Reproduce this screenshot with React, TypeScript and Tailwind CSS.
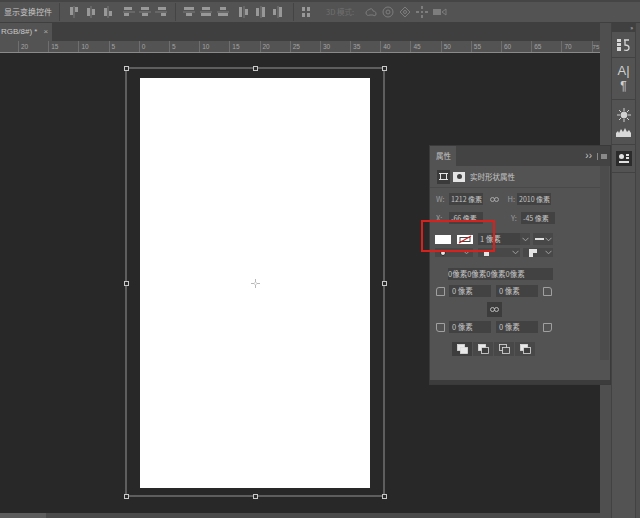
import React from "react";

const font = { fontFamily: '"Noto Sans CJK SC","Liberation Sans",sans-serif' };
const rulerLabels = [20, 15, 10, 5, 0, 5, 10, 15, 20, 25, 30, 35, 40, 45, 50, 55, 60, 65, 70];

function Align({ v, bars }: { v?: boolean; bars: number[][] }) {
  return (
    <svg width="12" height="12" viewBox="0 0 12 12" className="shrink-0">
      {v ? <rect x="0" y="5.5" width="12" height="1" fill="#7c7c7c" /> : <rect x="5.5" y="0" width="1" height="12" fill="#7c7c7c" />}
      {bars.map((b, i) => (
        <rect key={i} x={b[0]} y={b[1]} width={b[2]} height={b[3]} fill="#989898" />
      ))}
    </svg>
  );
}

function Sep() {
  return <div className="w-px h-[18px] bg-[#444444] shrink-0" />;
}

function Field({ w, children, cls = "" }: { w: string; children?: React.ReactNode; cls?: string }) {
  return (
    <div className={`${w} ${cls} h-[12px] bg-[#424242] text-[7.5px] leading-[12px] text-[#c4c4c4] pl-[2px] whitespace-nowrap overflow-hidden shrink-0`}>
      {children}
    </div>
  );
}

function Chevron() {
  return (
    <svg width="7" height="5" viewBox="0 0 7 5" className="shrink-0">
      <path d="M0.5 0.8 L3.5 3.8 L6.5 0.8" fill="none" stroke="#a0a0a0" strokeWidth="1" />
    </svg>
  );
}

function Corner({ r }: { r: string }) {
  return <div className={`w-[9px] h-[9px] border border-[#a0a0a0] shrink-0 ${r}`} />;
}

function Handle({ cls }: { cls: string }) {
  return <div className={`absolute w-[5px] h-[5px] border border-[#c8c8c8] bg-[#2a2a2a] ${cls}`} />;
}

function PathOp({ a, b, active }: { a: string; b: string; active?: boolean }) {
  return (
    <div className={`w-[20px] h-[14px] flex items-center justify-center ${active ? "bg-[#3e3e3e]" : "bg-[#484848]"}`}>
      <svg width="11" height="10" viewBox="0 0 11 10">
        <rect x="0.5" y="0.5" width="7" height="6" fill={a} stroke="#dcdcdc" strokeWidth="0.8" />
        <rect x="3.5" y="3.5" width="7" height="6" fill={b} stroke="#dcdcdc" strokeWidth="0.8" />
      </svg>
    </div>
  );
}

export default function App() {
  return (
    <div className="relative w-[640px] h-[518px] overflow-hidden flex flex-col bg-[#535353]" style={font}>
      {/* options bar */}
      <div className="h-[23px] shrink-0 bg-[#535353] border-t-2 border-[#454545] border-b border-b-[#3f3f3f] flex items-center text-[#c8c8c8]">
        <span className="text-[8px] ml-[4px] w-[52px] shrink-0 whitespace-nowrap">显示变换控件</span>
        <div className="ml-[3px]"><Sep /></div>
        <div className="flex items-center gap-[5px] ml-[8px]">
          <Align bars={[[2, 1, 3, 8], [7, 1, 3, 5]]} />
          <Align bars={[[2, 2, 3, 8], [7, 3, 3, 6]]} />
          <Align bars={[[2, 2, 3, 8], [7, 5, 3, 5]]} />
        </div>
        <div className="flex items-center gap-[4px] ml-[9px]">
          <Align v bars={[[1, 1, 8, 3], [1, 7, 5, 3]]} />
          <Align v bars={[[2, 1, 8, 3], [3, 7, 6, 3]]} />
          <Align v bars={[[3, 1, 8, 3], [6, 7, 5, 3]]} />
        </div>
        <div className="ml-[8px]"><Sep /></div>
        <div className="flex items-center gap-[5px] ml-[7px]">
          <Align v bars={[[1, 1, 10, 3], [3, 7, 6, 3]]} />
          <Align v bars={[[2, 1, 8, 3], [1, 7, 10, 3]]} />
          <Align v bars={[[3, 1, 6, 3], [1, 7, 10, 3]]} />
        </div>
        <div className="flex items-center gap-[5px] ml-[9px]">
          <Align bars={[[1, 1, 3, 10], [7, 3, 3, 6]]} />
          <Align bars={[[1, 2, 3, 8], [7, 1, 3, 10]]} />
          <Align bars={[[1, 3, 3, 6], [7, 1, 3, 10]]} />
        </div>
        <div className="ml-[9px]"><Sep /></div>
        <div className="ml-[6px]">
          <svg width="12" height="12" viewBox="0 0 12 12">
            <rect x="2" y="1" width="3" height="4" fill="#989898" />
            <rect x="7" y="1" width="3" height="4" fill="#989898" />
            <rect x="2" y="7" width="3" height="4" fill="#989898" />
            <rect x="7" y="7" width="3" height="4" fill="#989898" />
          </svg>
        </div>
        <span className="ml-[14px] text-[7.5px] text-[#6f6f6f] w-[31px] whitespace-nowrap shrink-0">3D 模式:</span>
        <div className="flex items-center gap-[5px] ml-[8px] text-[#7d7d7d]">
          <svg width="12" height="12" viewBox="0 0 12 12" fill="none" stroke="currentColor"><path d="M1 7c0-3 3-3 4-4 2-1 3 1 3 2 2 0 3 1 3 3s-2 2-3 1H5C3 10 1 9 1 7z" /></svg>
          <svg width="12" height="12" viewBox="0 0 12 12" fill="none" stroke="currentColor"><circle cx="6" cy="6" r="5" /><circle cx="6" cy="6" r="2" /></svg>
          <svg width="12" height="12" viewBox="0 0 12 12" fill="none" stroke="currentColor"><path d="M6 1l5 5-5 5-5-5z" /><circle cx="6" cy="6" r="1.5" /></svg>
          <svg width="12" height="12" viewBox="0 0 12 12" fill="currentColor"><rect x="5" y="0" width="2" height="3" /><rect x="5" y="9" width="2" height="3" /><rect x="0" y="5" width="3" height="2" /><rect x="9" y="5" width="3" height="2" /><rect x="5" y="5" width="2" height="2" /></svg>
          <svg width="14" height="10" viewBox="0 0 14 10" fill="currentColor"><rect x="0" y="2" width="8" height="6" /><path d="M9 5l4-3v6z" fill="none" stroke="currentColor" /></svg>
        </div>
      </div>

      <div className="flex-1 flex min-h-0">
        {/* document column */}
        <div className="w-[600px] shrink-0 flex flex-col min-h-0">
          {/* tab row */}
          <div className="h-[18px] shrink-0 bg-[#3f3f3f] flex">
            <div className="w-[52px] h-full bg-[#535353] text-[8px] leading-[18px] text-[#c8c8c8] pl-[1px] flex items-center gap-[6px] whitespace-nowrap" style={{ fontFamily: '"Liberation Sans",sans-serif' }}>
              <span>RGB/8#) *</span>
              <span className="text-[#a8a8a8]">×</span>
            </div>
          </div>
          {/* ruler */}
          <div className="h-[12px] shrink-0 bg-[#535353] border-b border-[#8a8a8a] flex pl-[18px]" style={{ fontFamily: '"Liberation Sans",sans-serif' }}>
            {rulerLabels.map((n, i) => (
              <div key={i} className="w-[30.2px] shrink-0 h-full border-l border-[#6e6e6e] text-[6.5px] leading-[12px] text-[#a4a4a4] pl-[2px]">{n}</div>
            ))}
            <div className="w-[8px] shrink-0 h-full border-l border-[#6e6e6e] text-[6px] leading-[12px] text-[#a4a4a4]">75</div>
          </div>
          {/* canvas */}
          <div className="relative flex-1 bg-[#282828] min-h-0">
            <div className="absolute left-[125px] top-[14px] w-[260px] h-[430px] border-2 border-[#5e5e5e]" />
            <div className="absolute left-[140px] top-[25px] w-[230px] h-[410px] bg-white" />
            <Handle cls="left-[124px] top-[13px]" />
            <Handle cls="left-[253px] top-[13px]" />
            <Handle cls="left-[382px] top-[13px]" />
            <Handle cls="left-[124px] top-[228px]" />
            <Handle cls="left-[382px] top-[228px]" />
            <Handle cls="left-[124px] top-[441px]" />
            <Handle cls="left-[253px] top-[441px]" />
            <Handle cls="left-[382px] top-[441px]" />
            <svg className="absolute left-[250px] top-[225px]" width="11" height="11" viewBox="0 0 11 11" fill="none" stroke="#b8b8b8">
              <path d="M5.5 1v3M5.5 7v3M1 5.5h3M7 5.5h3" />
              <rect x="4.5" y="4.5" width="2" height="2" stroke="#e0e0e0" />
            </svg>
          </div>
          {/* status */}
          <div className="h-[5px] shrink-0 bg-[#4a4a4a] flex">
            <div className="w-[46px] bg-[#5c5c5c]" />
          </div>
        </div>

        {/* right dock */}
        <div className="flex-1 flex bg-[#4f4f4f] pl-[11px]">
          <div className="w-[25px] shrink-0 bg-[#535353] border-l border-r border-[#424242] flex flex-col items-center self-stretch">
            <div className="w-full h-[9px] bg-[#404040] text-[6px] leading-[9px] text-right pr-[2px] text-[#c0c0c0]">»</div>
            <div className="w-full h-[26px] flex items-center justify-center border-b border-[#424242]">
              <svg width="13" height="14" viewBox="0 0 13 14" fill="#d8d8d8">
                <rect x="0" y="1" width="4" height="3" /><rect x="0" y="5" width="4" height="3" /><rect x="0" y="9" width="4" height="4" />
                <path d="M7 2h5M8 2v5c3 0 4 1 4 3s-2 3-5 2" fill="none" stroke="#d8d8d8" strokeWidth="1.3" />
              </svg>
            </div>
            <div className="w-full h-[42px] flex flex-col items-center justify-center border-b border-[#424242] text-[#d0d0d0]">
              <span className="text-[13px] leading-[16px]" style={{ fontFamily: '"Liberation Sans",sans-serif' }}>A|</span>
              <span className="text-[12px] leading-[15px]" style={{ fontFamily: '"Liberation Sans",sans-serif' }}>¶</span>
            </div>
            <div className="w-full h-[45px] flex flex-col items-center justify-center gap-[6px] border-b border-[#424242]">
              <svg width="14" height="14" viewBox="0 0 14 14" fill="#d0d0d0" stroke="#d0d0d0">
                <circle cx="7" cy="7" r="3" />
                <path d="M7 0v3M7 11v3M0 7h3M11 7h3M2 2l2 2M10 10l2 2M2 12l2-2M10 4l2-2" fill="none" />
              </svg>
              <svg width="15" height="9" viewBox="0 0 15 9" fill="#d8d8d8">
                <path d="M0 9V5l2-2 1 2 2-4 2 3 2-4 2 4 2-2 2 3v4z" />
              </svg>
            </div>
            <div className="w-full h-[28px] flex items-center justify-center border-b border-[#424242]">
              <div className="w-[16px] h-[15px] bg-[#2c2c2c] flex items-center justify-center">
                <svg width="12" height="11" viewBox="0 0 12 11" fill="#e0e0e0">
                  <circle cx="3.5" cy="3.5" r="2.5" /><rect x="8" y="1" width="3" height="2" /><rect x="8" y="4" width="3" height="2" /><rect x="1" y="8" width="10" height="2" />
                </svg>
              </div>
            </div>
          </div>
        </div>
      </div>

      {/* properties panel */}
      <div className="absolute left-[429px] top-[145px] w-[182px] h-[240px] bg-[#535353] border border-[#3a3a3a] flex flex-col text-[#c6c6c6]">
        <div className="h-[20px] shrink-0 bg-[#434343] flex items-stretch">
          <div className="w-[26px] bg-[#535353] text-[7.5px] leading-[20px] pl-[6px] whitespace-nowrap">属性</div>
          <div className="flex-1 flex items-center justify-end gap-[3px] pr-[3px] text-[10px]">
            <span className="leading-none" style={{ fontFamily: '"Liberation Sans",sans-serif' }}>››</span>
            <div className="w-px h-[7px] bg-[#8a8a8a] ml-[2px]" />
            <div className="w-[6px] h-[5px] bg-[#8a8a8a]" />
          </div>
        </div>
        <div className="flex flex-1 min-h-0">
          <div className="flex-1 min-w-0 flex flex-col">
            {/* mode row */}
            <div className="h-[22px] shrink-0 flex items-center pl-[7px] border-b border-[#494949]">
              <div className="w-[13px] h-[14px] bg-[#3a3a3a] flex items-center justify-center">
                <svg width="9" height="9" viewBox="0 0 9 9" fill="none" stroke="#e4e4e4">
                  <rect x="1.5" y="1.5" width="6" height="6" />
                  <path d="M0 1.5h3M6 1.5h3M0 7.5h3M6 7.5h3" />
                </svg>
              </div>
              <div className="ml-[3px] w-[12px] h-[10px] bg-[#e4e4e4] flex items-center justify-center">
                <div className="w-[5px] h-[5px] rounded-full bg-[#424242]" />
              </div>
              <span className="ml-[5px] text-[7.5px] whitespace-nowrap">实时形状属性</span>
            </div>
            {/* W / H */}
            <div className="flex items-center mt-[5px] pl-[6px] text-[7.5px] text-[#9c9c9c]">
              <span className="w-[13px]">W:</span>
              <Field w="w-[34px]" cls="!text-[7px]">1212 像素</Field>
              <svg className="ml-[7px]" width="9" height="5" viewBox="0 0 9 5" fill="none" stroke="#a8a8a8"><circle cx="2.5" cy="2.5" r="2" /><circle cx="6.5" cy="2.5" r="2" /></svg>
              <span className="ml-[5px] w-[11px] text-right">H:</span>
              <Field w="w-[34px]" cls="ml-[2px] !text-[7px]">2010 像素</Field>
            </div>
            {/* X / Y */}
            <div className="flex items-center mt-[7px] pl-[6px] text-[7.5px] text-[#9c9c9c]">
              <span className="w-[13px]">X:</span>
              <Field w="w-[34px]" cls="!text-[7px]">-66 像素</Field>
              <span className="ml-[28px] w-[10px]">Y:</span>
              <Field w="w-[34px]" cls="!text-[7px]">-45 像素</Field>
            </div>
            {/* fill / stroke */}
            <div className="flex items-center mt-[9px] pl-[5px]">
              <div className="w-[16px] h-[9px] bg-white shrink-0" />
              <div className="ml-[6px] w-[16px] h-[9px] bg-white shrink-0">
                <svg width="16" height="9" viewBox="0 0 16 9"><rect x="3" y="2.5" width="10" height="4" fill="none" stroke="#444" /><path d="M2 8L14 1" stroke="#d02020" strokeWidth="1.2" /></svg>
              </div>
              <Field w="w-[42px]" cls="ml-[5px]">1 像素</Field>
              <div className="w-[10px] h-[12px] bg-[#484848] flex items-center justify-center shrink-0"><Chevron /></div>
              <div className="ml-[3px] w-[20px] h-[12px] bg-[#484848] flex items-center justify-center gap-[1px] shrink-0">
                <div className="w-[9px] h-[2px] bg-[#e0e0e0]" />
                <Chevron />
              </div>
            </div>
            {/* align / cap / join */}
            <div className="flex items-center mt-[3px] pl-[5px]">
              <div className="w-[38px] h-[9px] bg-[#484848] flex items-center justify-between pl-[5px] pr-[3px] shrink-0">
                <div className="w-[6px] h-[6px] rounded-full bg-[#e4e4e4] border border-[#222]" />
                <Chevron />
              </div>
              <div className="ml-[5px] w-[42px] h-[9px] bg-[#484848] flex items-center justify-between pl-[6px] pr-[1px] shrink-0">
                <div className="w-[5px] h-[6px] bg-[#e4e4e4]" />
                <Chevron />
              </div>
              <div className="ml-[3px] w-[30px] h-[9px] bg-[#484848] flex items-center justify-between pl-[6px] pr-[1px] shrink-0">
                <svg width="8" height="8" viewBox="0 0 8 8"><path d="M0 0h8v4H4v4H0z" fill="#e4e4e4" /></svg>
                <Chevron />
              </div>
            </div>
            {/* all corners */}
            <div className="mt-[11px] ml-[18px]">
              <Field w="w-[105px]" cls="!pl-0">0像素0像素0像素0像素</Field>
            </div>
            {/* corners top */}
            <div className="flex items-center mt-[5px] pl-[6px]">
              <Corner r="rounded-tl-[3px]" />
              <Field w="w-[42px]" cls="ml-[4px] pl-[3px]">0 像素</Field>
              <Field w="w-[42px]" cls="ml-[5px] pl-[3px]">0 像素</Field>
              <Corner r="rounded-tr-[3px] ml-[5px]" />
            </div>
            <div className="h-[15px] w-[15px] bg-[#3c3c3c] ml-[57px] mt-[5px] flex items-center justify-center">
              <svg width="9" height="5" viewBox="0 0 9 5" fill="none" stroke="#b8b8b8"><circle cx="2.5" cy="2.5" r="2" /><circle cx="6.5" cy="2.5" r="2" /></svg>
            </div>
            {/* corners bottom */}
            <div className="flex items-center mt-[4px] pl-[6px]">
              <Corner r="rounded-bl-[3px]" />
              <Field w="w-[42px]" cls="ml-[4px] pl-[3px]">0 像素</Field>
              <Field w="w-[42px]" cls="ml-[5px] pl-[3px]">0 像素</Field>
              <Corner r="rounded-br-[3px] ml-[5px]" />
            </div>
            {/* path ops */}
            <div className="flex items-center gap-[1px] mt-[9px] ml-[22px]">
              <PathOp a="#e8e8e8" b="#e8e8e8" active />
              <PathOp a="#e8e8e8" b="#3e3e3e" />
              <PathOp a="#484848" b="#484848" />
              <PathOp a="#e8e8e8" b="#3e3e3e" />
            </div>
          </div>
          {/* scroll track */}
          <div className="w-[9px] shrink-0 mr-[1px] mb-[20px] bg-[#4c4c4c]" />
        </div>
        <div className="h-[4px] shrink-0 bg-[#3c3c3c]" />
      </div>

      {/* red annotation box */}
      <div className="absolute left-[421px] top-[220px] w-[74px] h-[32px] border-2 border-[#d8201c]" />
    </div>
  );
}
